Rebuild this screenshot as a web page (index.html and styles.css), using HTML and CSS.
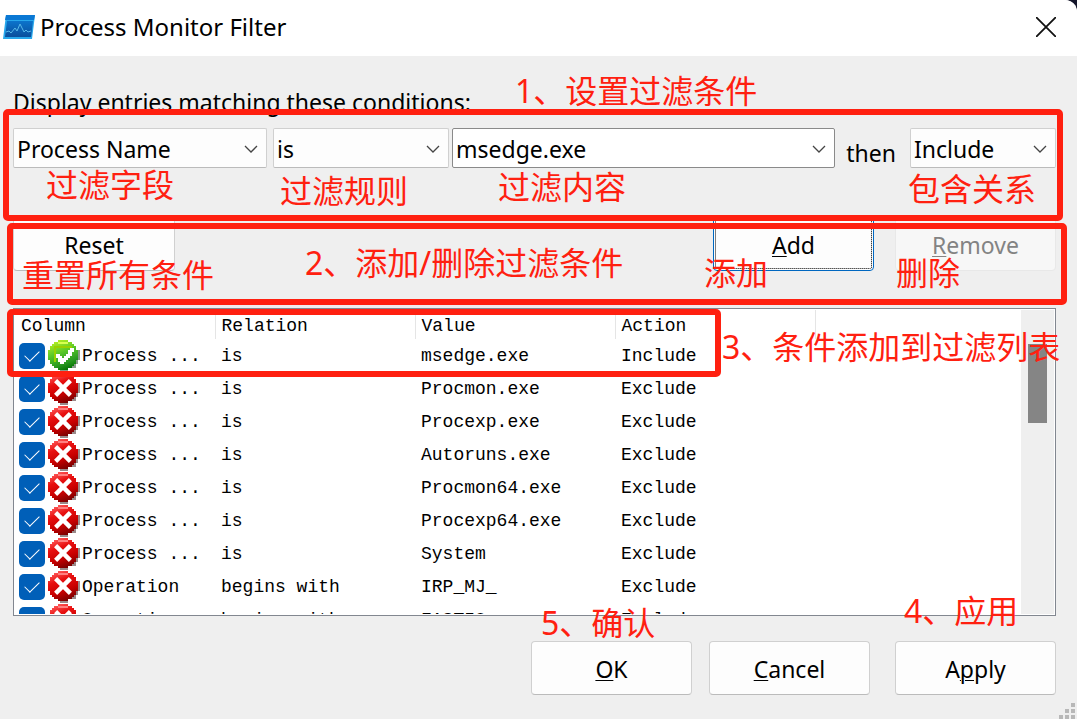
FILE: index.html
```html
<!DOCTYPE html>
<html lang="en">
<head>
<meta charset="utf-8">
<title>Process Monitor Filter</title>
<link rel="stylesheet" href="styles.css">
</head>
<body>
<svg class="defs" aria-hidden="true">
  <defs>
    <linearGradient id="redFill" x1=".3" y1="0" x2=".7" y2="1">
      <stop offset="0" stop-color="#ff5a5a"/><stop offset=".3" stop-color="#e81010"/><stop offset=".65" stop-color="#c80000"/><stop offset="1" stop-color="#700000"/>
    </linearGradient>
    <linearGradient id="greenFill" x1=".3" y1="0" x2=".7" y2="1">
      <stop offset="0" stop-color="#b8ee20"/><stop offset=".4" stop-color="#58c828"/><stop offset=".75" stop-color="#2a9a20"/><stop offset="1" stop-color="#007000"/>
    </linearGradient>
    <linearGradient id="appFill" x1="0" y1="0" x2="0" y2="1">
      <stop offset="0" stop-color="#0c74cc"/><stop offset="1" stop-color="#0a4f9c"/>
    </linearGradient>
    <symbol id="exclude" viewBox="0 0 16 16">
      <path fill="#9a8a8a" d="M14 5h2v5h-1v2h-1v2h-2v1h-2v1H6v-1h6v-4h2z"/>
      <path fill="#3a1010" d="M14 5h1v5h-1v2h-1v1h-1v1h-2v1H6v-1h4v-4h4z"/>
      <path fill="url(#redFill)" d="M5 0h5v1h2v1h1v1h1v2h1v5h-1v2h-1v1h-1v1h-2v1H5v-1H3v-1H2v-1H1v-2H0V5h1V3h1V2h1V1h2z"/>
      <path fill="#ff8080" d="M5 1h5v1H5z"/>
      <path class="cross" fill="none" stroke="#fff" stroke-width="2.200" d="M3.800 3.800l7.400 7.400M11.200 3.800l-7.400 7.400"/>
    </symbol>
    <symbol id="include" viewBox="0 0 16 16">
      <path fill="#8a9a8a" d="M14 5h2v5h-1v2h-1v2h-2v1h-2v1H6v-1h6v-4h2z"/>
      <path fill="#145014" d="M14 5h1v5h-1v2h-1v1h-1v1h-2v1H6v-1h4v-4h4z"/>
      <path fill="url(#greenFill)" d="M5 0h5v1h2v1h1v1h1v2h1v5h-1v2h-1v1h-1v1h-2v1H5v-1H3v-1H2v-1H1v-2H0V5h1V3h1V2h1V1h2z"/>
      <path fill="#d8ff50" d="M5 1h5v1H5z"/>
      <path fill="none" stroke="#9ad000" d="M3.500 11V3.500H12"/>
      <path fill="#fff" d="M11 4h2v2h-1v2h-1v1h-1v1H9v1H8v1H6v-1H5V9H4V7h2v1h1v1h1V8h1V7h1V5h1z"/>
    </symbol>
    <symbol id="chevron" viewBox="0 0 14 9">
      <path d="M1 1l6 6 6-6" fill="none" stroke="#444" stroke-width="1.300"/>
    </symbol>
  </defs>
</svg>

<main class="dialog">
  <header class="titlebar">
    <svg class="app-icon" viewBox="0 0 32 24" aria-hidden="true">
      <path d="M3 0h29l-3 24H0z" fill="#28a8ec"/>
      <path d="M3 0h29l-1 5H2z" fill="#0a78d4"/>
      <path d="M4 6h26l-2 16H2z" fill="url(#appFill)"/>
      <path d="M3 17l3-1 2 2 4-5 2 3 3-7 4 8 2-2 2 2 3-1" fill="none" stroke="#58b8e8" stroke-width="1"/>
    </svg>
    <h1 class="title">Process Monitor Filter</h1>
    <button class="close" aria-label="Close"><svg viewBox="0 0 20 20" aria-hidden="true"><path d="M0 0L20 20M20 0L0 20" stroke="#111" stroke-width="1.800"/></svg></button>
  </header>

  <form class="content">
    <p class="prompt">Display entries matching these conditions:</p>
    <div class="conditions">
      <div class="combo combo-field"><select aria-label="Field"><option>Process Name</option></select><svg class="chevron"><use href="#chevron"/></svg></div>
      <div class="combo combo-rule"><select aria-label="Relation"><option>is</option></select><svg class="chevron"><use href="#chevron"/></svg></div>
      <div class="combo combo-value"><input type="text" aria-label="Value" value="msedge.exe"><svg class="chevron"><use href="#chevron"/></svg></div>
      <label class="then" for="action">then</label>
      <div class="combo combo-action"><select id="action"><option>Include</option></select><svg class="chevron"><use href="#chevron"/></svg></div>
    </div>
    <div class="edit-actions">
      <button type="button" class="btn btn-reset">Reset</button>
      <button type="button" class="btn btn-focus"><u>A</u>dd</button>
      <button type="button" class="btn" disabled><u>R</u>emove</button>
    </div>

    <div class="list">
      <div class="list-view">
        <table>
          <thead><tr><th>Column</th><th>Relation</th><th>Value</th><th>Action</th><th class="rest"></th></tr></thead>
          <tbody>
            <tr><td><label><input type="checkbox" checked><svg class="state"><use href="#include"/></svg>Process ...</label></td><td>is</td><td>msedge.exe</td><td>Include</td><td></td></tr>
            <tr><td><label><input type="checkbox" checked><svg class="state"><use href="#exclude"/></svg>Process ...</label></td><td>is</td><td>Procmon.exe</td><td>Exclude</td><td></td></tr>
            <tr><td><label><input type="checkbox" checked><svg class="state"><use href="#exclude"/></svg>Process ...</label></td><td>is</td><td>Procexp.exe</td><td>Exclude</td><td></td></tr>
            <tr><td><label><input type="checkbox" checked><svg class="state"><use href="#exclude"/></svg>Process ...</label></td><td>is</td><td>Autoruns.exe</td><td>Exclude</td><td></td></tr>
            <tr><td><label><input type="checkbox" checked><svg class="state"><use href="#exclude"/></svg>Process ...</label></td><td>is</td><td>Procmon64.exe</td><td>Exclude</td><td></td></tr>
            <tr><td><label><input type="checkbox" checked><svg class="state"><use href="#exclude"/></svg>Process ...</label></td><td>is</td><td>Procexp64.exe</td><td>Exclude</td><td></td></tr>
            <tr><td><label><input type="checkbox" checked><svg class="state"><use href="#exclude"/></svg>Process ...</label></td><td>is</td><td>System</td><td>Exclude</td><td></td></tr>
            <tr><td><label><input type="checkbox" checked><svg class="state"><use href="#exclude"/></svg>Operation</label></td><td>begins with</td><td>IRP_MJ_</td><td>Exclude</td><td></td></tr>
            <tr><td><label><input type="checkbox" checked><svg class="state"><use href="#exclude"/></svg>Operation</label></td><td>begins with</td><td>FASTIO_</td><td>Exclude</td><td></td></tr>
          </tbody>
        </table>
      </div>
      <div class="scrollbar"><div class="thumb"></div></div>
    </div>

    <div class="footer">
      <button type="button" class="btn"><u>O</u>K</button>
      <button type="button" class="btn"><u>C</u>ancel</button>
      <button type="button" class="btn btn-apply">A<u>p</u>ply</button>
    </div>
  </form>
  <svg class="grip" viewBox="0 0 18 16" aria-hidden="true"><path fill="#b8b8b8" d="M12 0h4v4h-4zM6 6h4v4H6zM12 6h4v4h-4zM0 12h4v4H0zM6 12h4v4H6zM12 12h4v4h-4z"/></svg>

  <div class="notes">
    <div class="frame frame-conditions"></div>
    <div class="frame frame-edit"></div>
    <div class="frame frame-entry"></div>
    <span class="note n-set">1、设置过滤条件</span>
    <span class="note n-field">过滤字段</span>
    <span class="note n-rule">过滤规则</span>
    <span class="note n-value">过滤内容</span>
    <span class="note n-include">包含关系</span>
    <span class="note n-reset">重置所有条件</span>
    <span class="note n-edit">2、添加/删除过滤条件</span>
    <span class="note n-add">添加</span>
    <span class="note n-remove">删除</span>
    <span class="note n-list">3、条件添加到过滤列表</span>
    <span class="note n-apply">4、应用</span>
    <span class="note n-ok">5、确认</span>
  </div>
</main>
</body>
</html>
```

FILE: styles.css
```css
* { box-sizing: border-box; }

body {
  margin: 0;
  background: #15162b;
  color: #000;
  font-family: "Noto Sans", "Noto Sans CJK SC", sans-serif;
  font-size: 23px;
}

.defs { position: absolute; width: 0; height: 0; }

.dialog {
  position: relative;
  display: flex;
  flex-direction: column;
  height: 100vh;
  min-height: 560px;
  overflow: hidden;
  background: #efefef;
  border-radius: 0 12px 0 0;
}

.titlebar {
  display: flex;
  align-items: center;
  height: 56px;
  padding: 0 21px 2px 3px;
  background: #fff;
}
.app-icon { width: 32px; height: 24px; }
.title { flex: 1; margin: 0 0 0 5px; font-size: 24px; font-weight: 400; line-height: 32px; }
.close { display: flex; padding: 0; border: 0; background: none; }
.close svg { width: 20px; height: 20px; }

.content {
  flex: 1;
  display: flex;
  flex-direction: column;
  min-height: 0;
  padding: 30px 21px 24px 13px;
}
.prompt { margin: 0 0 10px; line-height: 32px; }

.conditions { display: flex; gap: 3px; }
.combo { position: relative; height: 40px; }
.combo select, .combo input {
  width: 100%;
  height: 100%;
  padding: 2px 32px 0 3px;
  border: 1px solid #d0d0d0;
  border-bottom-color: #bbb;
  border-radius: 2px;
  background: #fdfdfd;
  color: #000;
  font: inherit;
  appearance: none;
}
.combo input { border-color: #8a8a8a; background: #fff; }
.chevron { position: absolute; top: 17px; right: 9px; width: 14px; height: 9px; }
.combo-field { width: 254px; margin-right: 3px; }
.combo-rule { width: 176px; }
.combo-value { flex: 1; }
.combo-action { width: 146px; }
.then { padding: 9px 11px 0 8px; line-height: 32px; }

.edit-actions { display: flex; justify-content: flex-end; gap: 21px; margin-top: 48px; }
.btn {
  width: 161px;
  height: 54px;
  padding: 2px 0 0;
  border: 1px solid #d0d0d0;
  border-bottom-color: #bbb;
  border-radius: 4px;
  background: #fdfdfd;
  color: #000;
  font: inherit;
}
.btn u { text-decoration-thickness: 1px; text-underline-offset: 2px; }
.btn-reset { width: 162px; margin-right: auto; }
.btn-focus { border-color: #0067c0; outline: 1px dotted #000; outline-offset: -3px; }
.btn:disabled { border-color: #e8e8e8; background: #f7f7f7; color: #838383; }

.list {
  flex: 1;
  display: flex;
  min-height: 0;
  margin-top: 37px;
  padding: 1px;
  border: 1px solid #828790;
  background: #fff;
}
.list-view { flex: 1; overflow: hidden; }
table {
  width: 100%;
  border-collapse: collapse;
  table-layout: fixed;
  font-family: "Liberation Mono", monospace;
  font-size: 18px;
}
th {
  width: 200px;
  height: 29px;
  padding: 2px 0 0 6px;
  border-right: 1px solid #e5e5e5;
  font-weight: 400;
  text-align: left;
}
th.rest { width: auto; border: 0; }
td { height: 33px; padding: 0 0 0 6px; white-space: nowrap; }
td:first-child { padding-left: 4px; }
td label { display: flex; align-items: center; }
td input {
  width: 26px;
  height: 26px;
  margin: 0 3px 0 0;
  border-radius: 5px;
  background: #005fb8;
  appearance: none;
}
td input::after {
  content: "";
  display: block;
  width: 13px;
  height: 7px;
  margin: 7px 0 0 6px;
  border: solid #fff;
  border-width: 0 0 1px 1px;
  transform: rotate(-45deg);
}
.state { width: 32px; height: 32px; margin-right: 2px; shape-rendering: crispEdges; }
.cross { shape-rendering: geometricPrecision; }
.scrollbar { width: 33px; padding: 34px 7px 0; background: #efefef; }
.thumb { height: 79px; background: #858585; }

.footer { display: flex; justify-content: flex-end; gap: 17px; margin-top: 25px; }
.btn-apply { margin-left: 8px; }

.grip { position: absolute; right: 0; bottom: 0; width: 18px; height: 16px; }

.notes { position: absolute; inset: 0; pointer-events: none; }
.frame { position: absolute; border: 6px solid #ff2010; border-radius: 5px; }
.frame-conditions { left: 3px; right: 14px; top: 109px; height: 112px; }
.frame-edit { left: 7px; right: 10px; top: 223px; height: 82px; }
.frame-entry { left: 7px; width: 714px; top: 309px; height: 68px; }
.note {
  position: absolute;
  color: #ff2010;
  font-family: "Noto Sans", "Noto Sans CJK SC", sans-serif;
  font-size: 32px;
  line-height: 40px;
  white-space: nowrap;
}
.n-set { left: 515px; top: 71px; }
.n-field { left: 46px; top: 165px; }
.n-rule { left: 280px; top: 171px; }
.n-value { left: 498px; top: 167px; }
.n-include { left: 908px; top: 169px; }
.n-reset { left: 22px; top: 255px; }
.n-edit { left: 305px; top: 243px; }
.n-add { left: 704px; top: 253px; }
.n-remove { left: 896px; top: 253px; }
.n-list { left: 722px; top: 327px; }
.n-apply { left: 904px; top: 591px; }
.n-ok { left: 541px; top: 603px; }
```
